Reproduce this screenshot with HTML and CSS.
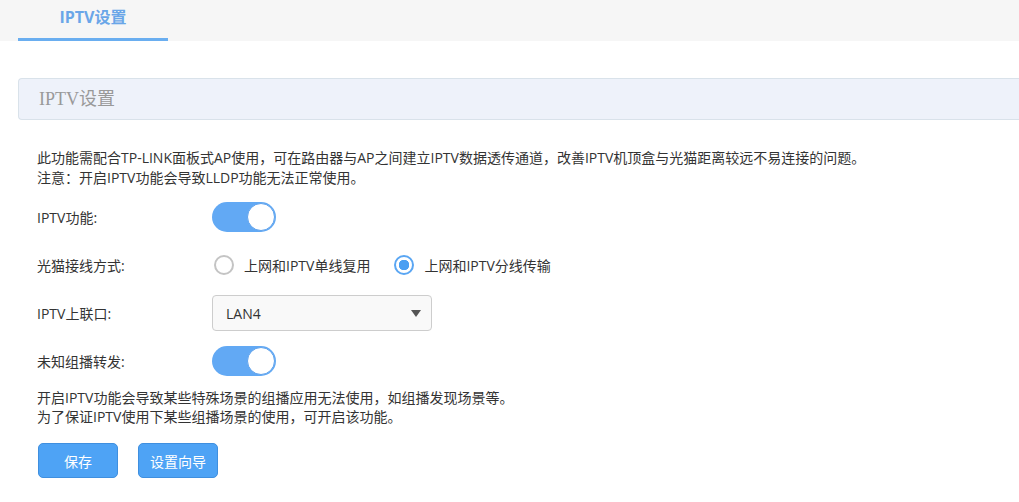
FILE: index.html
```html
<!DOCTYPE html>
<html lang="zh-CN">
<head>
<meta charset="utf-8">
<title>IPTV设置</title>
<link rel="stylesheet" href="styles.css">
</head>
<body>
<div class="topbar">
  <div class="tab">IPTV设置</div>
</div>
<div class="content">
  <div class="panel-head">IPTV设置</div>
  <div class="desc">
    <p>此功能需配合TP-LINK面板式AP使用，可在路由器与AP之间建立IPTV数据透传通道，改善IPTV机顶盒与光猫距离较远不易连接的问题。</p>
    <p>注意：开启IPTV功能会导致LLDP功能无法正常使用。</p>
  </div>
  <div class="row">
    <div class="label">IPTV功能:</div>
    <div class="switch on"><span class="knob"></span></div>
  </div>
  <div class="row">
    <div class="label">光猫接线方式:</div>
    <div class="radios">
      <label class="radio"><span class="circle"></span>上网和IPTV单线复用</label>
      <label class="radio checked"><span class="circle"></span>上网和IPTV分线传输</label>
    </div>
  </div>
  <div class="row">
    <div class="label">IPTV上联口:</div>
    <div class="select"><span>LAN4</span><span class="caret"></span></div>
  </div>
  <div class="row">
    <div class="label">未知组播转发:</div>
    <div class="switch on"><span class="knob"></span></div>
  </div>
  <div class="note">
    <p>开启IPTV功能会导致某些特殊场景的组播应用无法使用，如组播发现场景等。</p>
    <p>为了保证IPTV使用下某些组播场景的使用，可开启该功能。</p>
  </div>
  <div class="buttons">
    <button class="btn">保存</button>
    <button class="btn">设置向导</button>
  </div>
</div>
</body>
</html>
```
FILE: styles.css
```css
* { box-sizing: border-box; }
html, body { margin: 0; padding: 0; background: #fff; }
body {
  font-family: "Open Sans", "Noto Sans CJK SC", sans-serif;
  font-size: 14px;
  color: #333;
  width: 1019px;
  overflow: hidden;
}
p { margin: 0; }
.topbar {
  height: 41px;
  background: #f6f6f6;
  padding-left: 18px;
  display: flex;
  align-items: flex-end;
}
.tab {
  width: 150px;
  height: 41px;
  border-bottom: 3px solid #6aaef0;
  text-align: center;
  color: #6aa6e8;
  font-weight: bold;
  font-size: 16px;
  line-height: 35px;
}
.content {
  padding: 37px 0 0 18px;
}
.panel-head {
  height: 42px;
  background: #eef2fa;
  border: 1px solid #d9e2ea;
  border-right: none;
  border-radius: 4px 0 0 4px;
  padding-left: 20px;
  font-family: "Liberation Serif", "Noto Sans CJK SC", serif;
  font-size: 18px;
  color: #999;
  line-height: 40px;
}
.desc {
  margin-top: 28px;
  padding-left: 19px;
  line-height: 20px;
}
.row {
  display: flex;
  align-items: center;
  height: 48px;
  padding-left: 19px;
}
.desc + .row { margin-top: 5px; }
.label { width: 175px; }
.switch {
  width: 64px;
  height: 30px;
  border-radius: 15px;
  background: #62a9f4;
  position: relative;
}
.switch .knob {
  position: absolute;
  right: 1px;
  top: 1px;
  width: 28px;
  height: 28px;
  border-radius: 50%;
  background: #fff;
  border: 1px solid #5fa2ec;
}
.radios { display: flex; gap: 22px; }
.radio { display: flex; align-items: center; gap: 10px; }
.circle {
  width: 20px;
  height: 20px;
  border-radius: 50%;
  border: 2px solid #c4c4c4;
  background: #fff;
  margin-left: 2px;
}
.radio.checked .circle {
  border-color: #5aa6f3;
  background: radial-gradient(circle, #4b9ff2 0 5px, #fff 5.5px);
}
.select {
  width: 220px;
  height: 36px;
  border: 1px solid #cdcdcd;
  border-radius: 4px;
  background: #f9f9f9;
  display: flex;
  align-items: center;
  justify-content: space-between;
  padding: 0 10px 0 13px;
  font-size: 14px;
}
.caret {
  width: 0;
  height: 0;
  border-left: 5px solid transparent;
  border-right: 5px solid transparent;
  border-top: 7px solid #555;
}
.note {
  margin-top: 3px;
  padding-left: 19px;
  line-height: 19px;
}
.buttons {
  display: flex;
  gap: 20px;
  margin-top: 17px;
  padding-left: 20px;
}
.btn {
  width: 80px;
  height: 35px;
  border: 1px solid #3f8fdf;
  border-radius: 5px;
  background: #4ea3f5;
  color: #fff;
  font-family: "Open Sans", "Noto Sans CJK SC", sans-serif;
  font-size: 14px;
  padding: 0;
}
```
